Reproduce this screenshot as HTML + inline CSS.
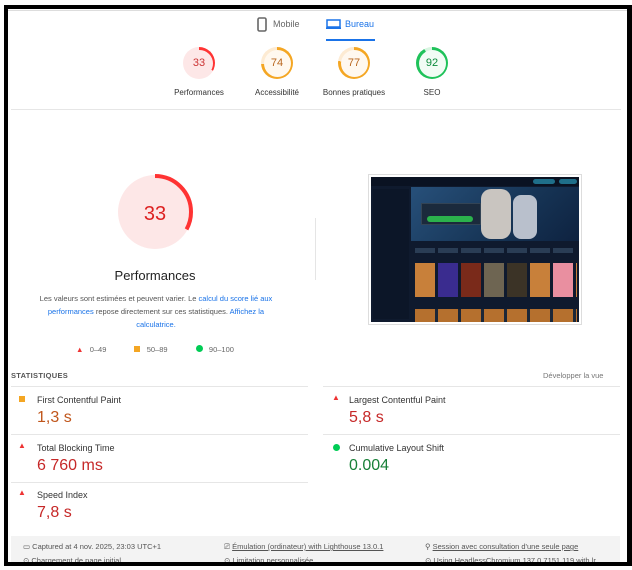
<!DOCTYPE html>
<html><head><meta charset="utf-8"><style>
*{margin:0;padding:0;box-sizing:border-box}
body{width:632px;height:570px;background:#fff;font-family:"Liberation Sans",sans-serif;position:relative;overflow:hidden;color:#212121}
.a{position:absolute}
.g{position:absolute;text-align:center;font-size:8px;color:#333}
.ring{width:32px;height:32px;border-radius:50%;margin:0 auto 9px;display:flex;align-items:center;justify-content:center;font-size:11px}
.ring span{width:27px;height:27px;border-radius:50%;display:flex;align-items:center;justify-content:center}
.sl{font-size:9px;color:#333;position:absolute}
.sv{font-size:16px;position:absolute}
.hr{position:absolute;height:1px;background:#e6e6e6}
.b{position:absolute;background:#000}
</style></head><body>
<div class="a" style="left:8px;top:10px;width:619px;height:1px;background:#ddd"></div>
<!-- tabs -->
<svg class="a" style="left:257px;top:17px" width="10" height="15"><rect x="1" y="1" width="8" height="13" rx="1.5" fill="none" stroke="#666" stroke-width="1.6"/></svg>
<div class="a" style="left:273px;top:19px;font-size:9px;color:#666">Mobile</div>
<svg class="a" style="left:326px;top:19px" width="15" height="10"><rect x="1" y="1" width="13" height="7" fill="none" stroke="#1a73e8" stroke-width="1.5"/><rect x="0" y="8.5" width="15" height="1.5" fill="#1a73e8"/></svg>
<div class="a" style="left:345px;top:19px;font-size:9px;color:#1a73e8">Bureau</div>
<div class="a" style="left:326px;top:39px;width:49px;height:2px;background:#1a73e8"></div>
<!-- gauges -->
<div class="g" style="left:164px;top:47px;width:70px"><div class="ring" style="background:conic-gradient(#f33 0 33%,#fde7e7 33%)"><span style="background:#fde7e7;color:#c33">33</span></div>Performances</div>
<div class="g" style="left:242px;top:47px;width:70px"><div class="ring" style="background:conic-gradient(#f4a623 0 74%,#fdebd3 74%)"><span style="background:#fff8ef;color:#b8651d">74</span></div>Accessibilité</div>
<div class="g" style="left:309px;top:47px;width:90px"><div class="ring" style="background:conic-gradient(#f4a623 0 77%,#fdebd3 77%)"><span style="background:#fff8ef;color:#b8651d">77</span></div>Bonnes pratiques</div>
<div class="g" style="left:397px;top:47px;width:70px"><div class="ring" style="background:conic-gradient(#1fc25a 0 92%,#d8f5e1 92%)"><span style="background:#f2fcf5;color:#0b8a3a">92</span></div>SEO</div>
<div class="hr" style="left:11px;top:109px;width:610px"></div>
<!-- big gauge -->
<svg class="a" style="left:115px;top:172px" width="80" height="80"><circle cx="40" cy="40" r="37" fill="#fde7e7"/><circle cx="40" cy="40" r="36" fill="none" stroke="#f33" stroke-width="4" stroke-dasharray="74.6 300" transform="rotate(-90 40 40)"/><text x="40" y="48" text-anchor="middle" font-size="20" fill="#d22" font-family="Liberation Sans">33</text></svg>
<div class="a" style="left:60px;top:268px;width:190px;text-align:center;font-size:13px;color:#222">Performances</div>
<div class="a" style="left:34px;top:292px;width:244px;text-align:center;font-size:7.5px;color:#555;line-height:13px">Les valeurs sont estimées et peuvent varier. Le <span style="color:#1a73e8">calcul du score lié aux performances</span> repose directement sur ces statistiques. <span style="color:#1a73e8">Affichez la calculatrice.</span></div>
<div class="a" style="left:76px;top:345px;font-size:7.5px;color:#666;width:220px"><span style="color:#e33">▲</span>&nbsp;&nbsp; 0–49 <span style="display:inline-block;width:6px;height:6px;background:#f4a623;margin-left:26px"></span>&nbsp;&nbsp; 50–89 <span style="display:inline-block;width:7px;height:7px;background:#0c5;border-radius:50%;margin-left:26px"></span>&nbsp;&nbsp; 90–100</div>
<div class="a" style="left:315px;top:218px;width:1px;height:62px;background:#e5e5e5"></div>
<!-- screenshot -->
<div class="a" style="left:368px;top:174px;width:214px;height:151px;border:1px solid #ddd;padding:2px;background:#fff">
<div style="position:relative;width:208px;height:145px;background:#0f1a2e;overflow:hidden">
<div class="a" style="left:0;top:0;width:208px;height:9px;background:#0a1222"></div>
<div class="a" style="left:162px;top:2px;width:22px;height:5px;border-radius:3px;background:#1f6f8a"></div>
<div class="a" style="left:188px;top:2px;width:18px;height:5px;border-radius:3px;background:#1f6f8a"></div>
<div class="a" style="left:40px;top:10px;width:168px;height:54px;background:linear-gradient(135deg,#27507a,#163455 60%,#0e2240)"></div>
<div class="a" style="left:110px;top:12px;width:30px;height:50px;border-radius:10px;background:#c9c5c0"></div>
<div class="a" style="left:142px;top:18px;width:24px;height:44px;border-radius:8px;background:#b9c0cc"></div>
<div class="a" style="left:50px;top:26px;width:60px;height:22px;background:#1b2a3c;border:1px solid #345"></div>
<div class="a" style="left:56px;top:39px;width:46px;height:6px;border-radius:3px;background:#2bb24c"></div>
<div class="a" style="left:2px;top:12px;width:36px;height:130px;background:#0c1628"></div>
<div class="a" style="left:44px;top:71px;width:160px;height:5px;background:repeating-linear-gradient(90deg,#2a3d55 0 20px,transparent 20px 23px)"></div>
<div class="a" style="left:44px;top:86px;width:162px;height:34px;background:repeating-linear-gradient(90deg,#c8803a 0 20px,transparent 20px 23px)"></div>
<div class="a" style="left:67px;top:86px;width:20px;height:34px;background:#3a2c8f"></div>
<div class="a" style="left:90px;top:86px;width:20px;height:34px;background:#7a2a1a"></div>
<div class="a" style="left:113px;top:86px;width:20px;height:34px;background:#6e6552"></div>
<div class="a" style="left:136px;top:86px;width:20px;height:34px;background:#3b3326"></div>
<div class="a" style="left:182px;top:86px;width:20px;height:34px;background:#e98fa0"></div>
<div class="a" style="left:44px;top:132px;width:162px;height:13px;background:repeating-linear-gradient(90deg,#b5702e 0 20px,#1b2738 20px 23px)"></div>
</div></div>
<!-- stats -->
<div class="a" style="left:11px;top:371px;font-size:7.5px;color:#555;font-weight:bold;letter-spacing:.3px">STATISTIQUES</div>
<div class="a" style="left:543px;top:371px;font-size:7.5px;color:#777">Développer la vue</div>
<div class="hr" style="left:11px;top:386px;width:297px"></div>
<div class="hr" style="left:323px;top:386px;width:297px"></div>
<div class="hr" style="left:11px;top:434px;width:297px"></div>
<div class="hr" style="left:323px;top:434px;width:297px"></div>
<div class="hr" style="left:11px;top:482px;width:297px"></div>
<div class="a" style="left:19px;top:396px;width:6px;height:6px;background:#f4a623"></div>
<div class="sl" style="left:37px;top:395px">First Contentful Paint</div>
<div class="sv" style="left:37px;top:409px;color:#c0561c">1,3 s</div>
<div class="a" style="left:332px;top:393px;font-size:8px;color:#e33">▲</div>
<div class="sl" style="left:349px;top:395px">Largest Contentful Paint</div>
<div class="sv" style="left:349px;top:409px;color:#c62828">5,8 s</div>
<div class="a" style="left:18px;top:441px;font-size:8px;color:#e33">▲</div>
<div class="sl" style="left:37px;top:443px">Total Blocking Time</div>
<div class="sv" style="left:37px;top:457px;color:#c62828">6 760 ms</div>
<div class="a" style="left:333px;top:444px;width:7px;height:7px;border-radius:50%;background:#0c5"></div>
<div class="sl" style="left:349px;top:443px">Cumulative Layout Shift</div>
<div class="sv" style="left:349px;top:457px;color:#188038">0.004</div>
<div class="a" style="left:18px;top:488px;font-size:8px;color:#e33">▲</div>
<div class="sl" style="left:37px;top:490px">Speed Index</div>
<div class="sv" style="left:37px;top:504px;color:#c62828">7,8 s</div>
<!-- footer -->
<div class="a" style="left:11px;top:536px;width:609px;height:30px;background:#f3f3f3"></div>
<div class="a" style="left:23px;top:542px;font-size:7.5px;color:#555">▭ Captured at 4 nov. 2025, 23:03 UTC+1</div>
<div class="a" style="left:224px;top:542px;font-size:7.5px;color:#555">⎚ <u>Émulation (ordinateur) with Lighthouse 13.0.1</u></div>
<div class="a" style="left:425px;top:542px;font-size:7.5px;color:#555">⚲ <u>Session avec consultation d'une seule page</u></div>
<div class="a" style="left:23px;top:556px;font-size:7.5px;color:#555">⊙ Chargement de page initial</div>
<div class="a" style="left:224px;top:556px;font-size:7.5px;color:#555">⊙ Limitation personnalisée</div>
<div class="a" style="left:425px;top:556px;font-size:7.5px;color:#555">⊙ Using HeadlessChromium 137.0.7151.119 with lr</div>
<!-- frame -->
<div class="b" style="left:4px;top:5px;width:628px;height:4px"></div>
<div class="b" style="left:4px;top:5px;width:4px;height:561px"></div>
<div class="b" style="left:627px;top:5px;width:5px;height:561px"></div>
<div class="b" style="left:4px;top:562px;width:628px;height:4px"></div>
</body></html>
